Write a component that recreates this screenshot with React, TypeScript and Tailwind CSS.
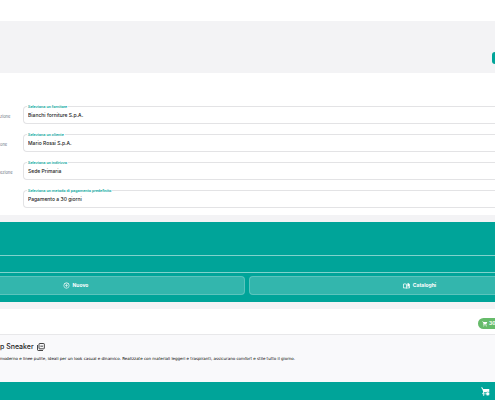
import { useId } from 'react';
import { MdAddCircleOutline, MdShoppingCart } from 'react-icons/md';

type FieldProps = {
  hint: string;
  label: string;
  value: string;
}

const fields: FieldProps[] = [
  { hint: 'zione', label: 'Seleziona un fornitore', value: 'Bianchi forniture S.p.A.' },
  { hint: 'one', label: 'Seleziona un cliente', value: 'Mario Rossi S.p.A.' },
  { hint: 'ezione', label: 'Seleziona un indirizzo', value: 'Sede Primaria' },
  { hint: '', label: 'Seleziona un metodo di pagamento predefinito', value: 'Pagamento a 30 giorni' },
];

const Field = ({ hint, label, value }: FieldProps) => {
  const id = useId();

  return (
    <div className="flex items-center">
      <span className="w-[23px] shrink-0 pt-[4px] text-[4px] text-gray-500">{hint}</span>
      <div className="relative grow">
        {/* Floating label over the top border */}
        <label htmlFor={id} className="absolute left-[4px] top-[-2px] bg-white px-px font-['Roboto',sans-serif] text-[4px] font-medium leading-[5px] text-[#00a499]">
          {label}
        </label>
        <select
          id={id}
          className="block h-[18px] w-full appearance-none rounded-l-[4px] border border-r-0 border-[#e3e3e5] bg-white pl-[4px] pt-[2px] text-[5px] font-medium text-[#222]"
        >
          <option>{value}</option>
        </select>
      </div>
    </div>
  )
}

const CatalogIcon = () => (
  <svg width="7" height="6" viewBox="0 0 28 24" fill="none" stroke="currentColor" strokeWidth="3">
    <path d="M14 5v16M14 5C10 3 6 3 2 4v16c4-1 8-1 12 1 4-2 8-2 12-1V4" />
    <path d="M18 2l6-1v12l-6 1z" fill="currentColor" strokeWidth="1" />
  </svg>
)

const CopyIcon = () => (
  <svg width="8" height="8" viewBox="0 0 24 24" fill="none" stroke="currentColor" strokeWidth="2.5">
    <rect x="6" y="1.500" width="16" height="16" rx="2" />
    <path d="M1.500 6v14.500c0 1 1 2 2 2H18M10 9.500h8" />
  </svg>
)

const CartIcon = () => (
  <svg width="9" height="9" viewBox="0 0 24 24" fill="currentColor">
    <path d="M0 1h4l2 4h16v9H8l-1 3h8v2H5c-1.500 0-2-1-1.500-2L6 13 2.500 3H0z" />
    <circle cx="7" cy="21.500" r="2" />
    <circle cx="18" cy="18" r="5" stroke="#00a499" strokeWidth="1" />
  </svg>
)

const App = () => {
  return (
    <div className="min-h-screen overflow-hidden bg-[#f3f3f5] font-['Inter',sans-serif] text-[#222]">
      <div className="h-[21px] bg-white" />

      {/* Toolbar */}
      <div className="flex h-[52px] items-end justify-end pb-[9px]">
        <button aria-label="Salva" className="h-[12px] w-[3px] rounded-l-[3px] bg-[#00a499]" />
      </div>

      {/* Order details */}
      <form className="flex flex-col gap-[10px] bg-white pb-[7px] pt-[33px]">
        {fields.map((field) => (
          <Field key={field.label} {...field} />
        ))}
      </form>

      {/* Products */}
      <div className="mt-[7px] bg-[#00a499] pb-[7px] text-white">
        <div className="h-[34px] border-b border-white/50" />
        <div className="h-[17px] border-b border-white/50" />
        <div className="mt-[3px] flex gap-[4px]">
          <button className="flex h-[19px] w-[245px] items-center justify-center gap-[3px] rounded-r-[4px] border border-l-0 border-white/20 bg-white/20 pr-[93px] text-[5px] font-bold">
            <MdAddCircleOutline size={7} />
            Nuovo
          </button>
          <button className="flex h-[19px] grow items-center justify-center gap-[3px] rounded-l-[4px] border border-r-0 border-white/20 bg-white/20 pl-[94px] text-[5px] font-bold">
            <CatalogIcon />
            Cataloghi
          </button>
        </div>
      </div>

      {/* Product card */}
      <div className="mt-[7px] border-b border-[#e8e8ea] bg-white">
        <div className="flex h-[25px] items-center justify-end pt-[4px]">
          <span className="flex h-[11px] w-[17px] items-center gap-px overflow-hidden rounded-l-full bg-[#66bb6a] pl-[4px] text-[5px] font-bold text-white">
            <MdShoppingCart size={6} className="shrink-0" />
            30
          </span>
        </div>
      </div>
      <div className="h-[47px] overflow-hidden bg-[#f9f9fb] pt-[7px]">
        <h2 className="flex items-center gap-[3px] text-[7px] font-medium leading-[10px]">
          p Sneaker
          <CopyIcon />
        </h2>
        <p className="mt-[4px] whitespace-nowrap font-['DejaVu_Sans',sans-serif] text-[4px] leading-[6px] text-black">
          moderno e linee pulite, ideali per un look casual e dinamico. Realizzate con materiali leggeri e traspiranti, assicurano comfort e stile tutto il giorno.
        </p>
      </div>

      <div className="flex h-[18px] items-center justify-end bg-[#00a499] pr-[5px] text-white">
        <button aria-label="Carrello"><CartIcon /></button>
      </div>
    </div>
  )
}

export default App;
